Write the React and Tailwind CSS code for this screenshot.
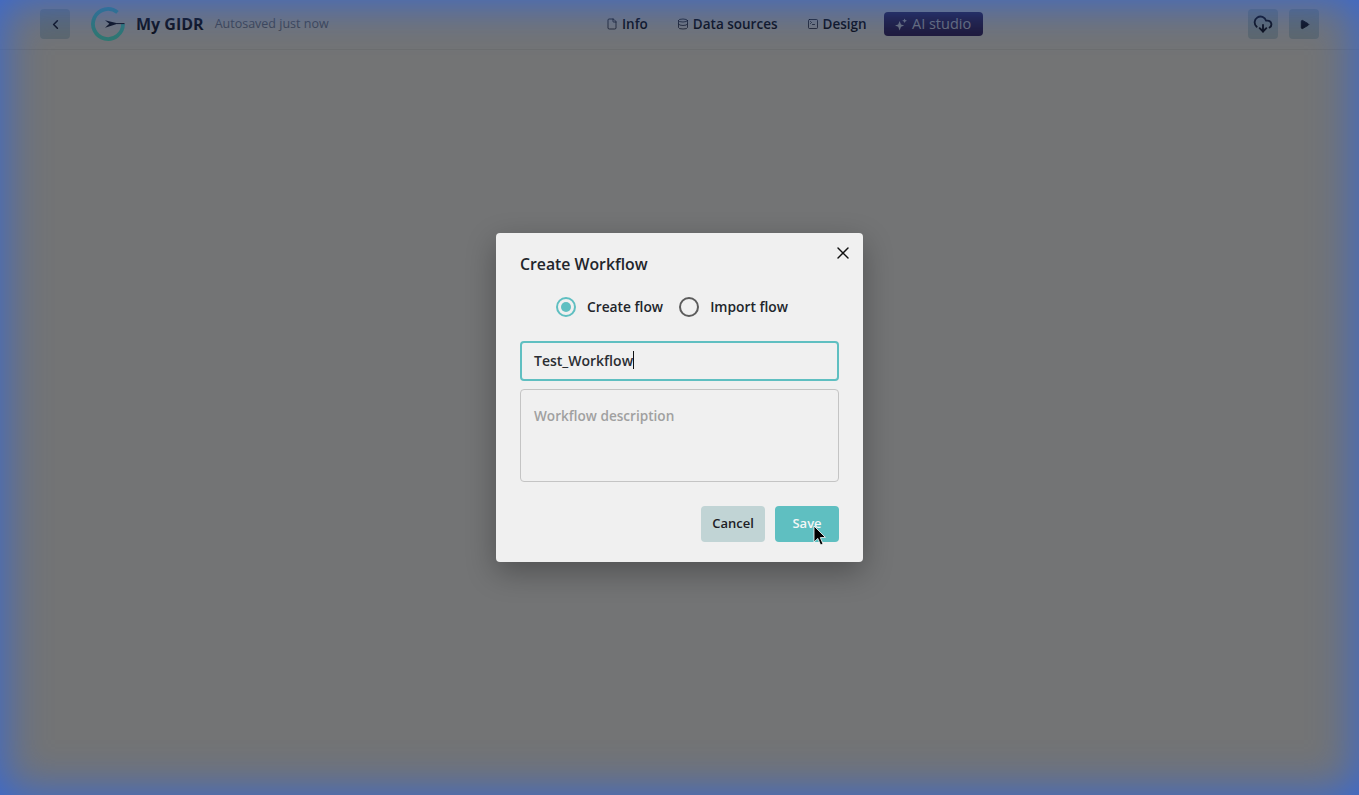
import { ChevronLeft, CloudDownload, Database, File, Play, SquareTerminal, X } from 'lucide-react';

const font = { fontFamily: '"Open Sans", sans-serif' };

function Logo() {
  return (
    <svg width="36" height="36" viewBox="0 0 36 36" fill="none">
      <defs>
        <linearGradient id="logoArc" x1="0" y1="0" x2="0" y2="1">
          <stop offset="0" stopColor="#5ce8ee" />
          <stop offset="1" stopColor="#5cf0dc" />
        </linearGradient>
      </defs>
      <path d="M27.5 6.4 A15 15 0 1 0 33 18" stroke="url(#logoArc)" strokeWidth="3.8" />
      <path d="M15 14.2 L28.3 17.5 L15 21.8 L19.3 17.8 Z" fill="#1a1c2c" />
      <path d="M27 17.6 H34.5" stroke="#1a1c2c" strokeWidth="1" />
    </svg>
  );
}

function Sparkle() {
  return (
    <svg width="12" height="13" viewBox="0 0 12 13" fill="currentColor">
      <path d="M4.6 3 L6 6.4 L9.2 7.6 L6 8.8 L4.6 12.4 L3.2 8.8 L0 7.6 L3.2 6.4 Z" />
      <path d="M9.6 0.4 L10.3 2 L12 2.7 L10.3 3.4 L9.6 5 L8.9 3.4 L7.2 2.7 L8.9 2 Z" />
    </svg>
  );
}

function SquareButton({ children }) {
  return (
    <button className="flex h-[30px] w-[30px] items-center justify-center rounded bg-[#bccfd6] text-[#1a1c2c]">
      {children}
    </button>
  );
}

function NavLink({ icon: Icon, label }) {
  return (
    <div className="flex items-center gap-1 text-[#1a1c2c]">
      <Icon size={12} strokeWidth={1.5} />
      <span className="text-[13.5px] font-semibold">{label}</span>
    </div>
  );
}

function Header() {
  return (
    <header className="flex h-[50px] items-center border-b border-[#d8dadc] pb-px pl-10 pr-10">
      <div className="flex w-[566px] items-center">
        <SquareButton><ChevronLeft size={15} strokeWidth={2.5} /></SquareButton>
        <div className="ml-5"><Logo /></div>
        <span className="ml-[10px] text-[16px] font-bold text-[#1a1c2c]">My GIDR</span>
        <span className="ml-[11px] text-[12.5px] text-[#7d8595]">Autosaved just now</span>
      </div>
      <nav className="flex items-center gap-[29px]">
        <NavLink icon={File} label="Info" />
        <NavLink icon={Database} label="Data sources" />
        <div className="flex items-center gap-[17px]">
          <NavLink icon={SquareTerminal} label="Design" />
          <button className="flex h-6 w-[99px] items-center justify-center gap-[5px] rounded bg-[#3c2f6c] text-[14.5px] text-[#d5d8e6]">
            <Sparkle />
            AI studio
          </button>
        </div>
      </nav>
      <div className="flex flex-1 justify-end gap-[11px]">
        <SquareButton><CloudDownload size={20} strokeWidth={2.25} /></SquareButton>
        <SquareButton><Play size={11} fill="currentColor" /></SquareButton>
      </div>
    </header>
  );
}

function Radio({ label, checked }) {
  return (
    <label className="flex items-center gap-[11px]">
      <span className={`flex h-5 w-5 items-center justify-center rounded-full border-2 ${checked ? 'border-[#5fbfc1]' : 'border-[#5c5c5c]'}`}>
        {checked && <span className="h-[10px] w-[10px] rounded-full bg-[#5fbfc1]" />}
      </span>
      <span className="text-[13.8px] font-semibold text-[#22252b]">{label}</span>
    </label>
  );
}

function WorkflowModal() {
  return (
    <div className="relative h-[329px] w-[367px] rounded bg-[#f0f0f0] px-6 shadow-[0_10px_30px_rgba(0,0,0,0.3)]">
      <button className="absolute right-[10px] top-[10px] text-[#111]"><X size={20} strokeWidth={1.7} /></button>
      <h2 className="pt-[19px] text-[15.8px] font-semibold leading-[24px] text-[#22252b]">Create Workflow</h2>
      <div className="mt-[21px] flex justify-center gap-4 pr-[15px]">
        <Radio label="Create flow" checked />
        <Radio label="Import flow" />
      </div>
      <div className="mt-[23px] flex h-10 items-center rounded border-2 border-[#5fbfc1] px-[12px] pb-px text-[14px] font-semibold text-[#2b2e33]">
        Test_Workflow<span className="h-[18px] w-px bg-[#111]" />
      </div>
      <div className="mt-2 h-[93px] rounded border border-[#c4c4c4] px-[13px] pt-4 text-[13.6px] font-semibold leading-[20px] text-[#a0a0a0]">
        Workflow description
      </div>
      <div className="mt-6 flex justify-end gap-[10px]">
        <button className="h-9 w-16 rounded bg-[#c1d4d5] text-[13px] font-semibold text-[#1d2025]">Cancel</button>
        <button className="h-9 w-16 rounded bg-[#5fbfc1] text-[13px] font-semibold text-[#f3f6f6]">Save</button>
      </div>
    </div>
  );
}

export default function App() {
  return (
    <div className="relative h-[795px] overflow-hidden bg-[#e6e8ea]" style={font}>
      <Header />
      <div className="absolute inset-0 flex items-center justify-center bg-black/50 shadow-[inset_0_0_45px_1px_#3568d8]">
        <WorkflowModal />
      </div>
      <svg className="absolute left-[813px] top-[525px]" width="14" height="22" viewBox="0 0 14 22">
        <path d="M1 1 V17 L4.8 13.4 L7.6 20 L10 19 L7.3 12.6 L12.4 12.4 Z" fill="#000" stroke="#fff" strokeWidth="0.8" />
      </svg>
    </div>
  );
}
